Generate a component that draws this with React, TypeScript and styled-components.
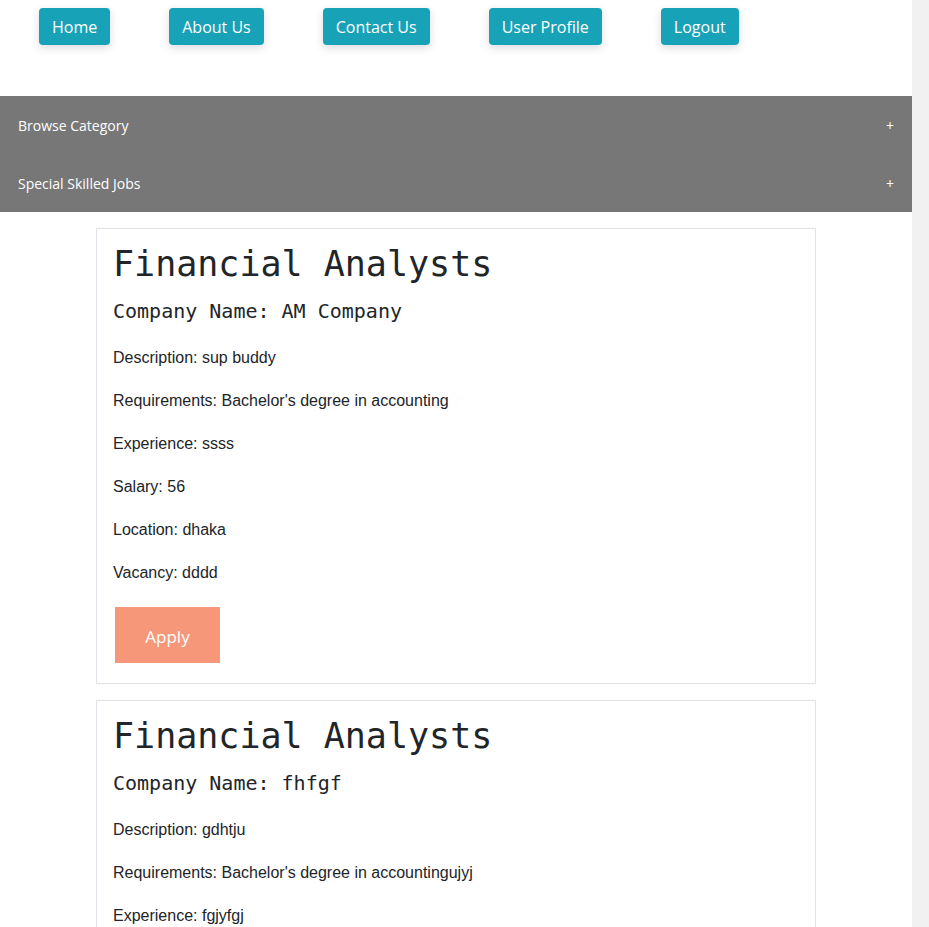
import React from "react";
import styled, { createGlobalStyle } from "styled-components";

const GlobalStyle = createGlobalStyle`
  html {
    overflow-y: scroll;
    background: #f1f1f1;
  }
  html::-webkit-scrollbar {
    width: 17px;
    background: #f1f1f1;
  }
  html::-webkit-scrollbar-thumb {
    background: #c1c1c1;
    border: 2px solid #f1f1f1;
    border-top-width: 17px;
  }
  body {
    margin: 0;
    padding: 0;
    width: 912px;
    background: #ffffff;
    font-family: "Liberation Sans", Arial, sans-serif;
    color: #212529;
  }
`;

const Nav = styled.nav`
  display: flex;
  align-items: flex-start;
  gap: 59px;
  height: 96px;
  padding: 8px 0 0 39px;
  box-sizing: border-box;
`;

const NavButton = styled.button`
  height: 37px;
  padding: 0 13px;
  border: 0;
  border-radius: 4px;
  background: #17a2b8;
  color: #ffffff;
  font-family: "Open Sans", sans-serif;
  font-size: 16px;
  box-shadow: 0 3px 8px rgba(60, 60, 90, 0.18);
  cursor: pointer;
`;

const Accordion = styled.div`
  background: #777777;
`;

const AccordionRow = styled.div`
  display: flex;
  align-items: center;
  justify-content: space-between;
  height: 58px;
  padding: 0 18px;
  color: #ffffff;
  font-family: "Open Sans", sans-serif;
  font-size: 14px;
  cursor: pointer;
`;

const Plus = styled.span`
  font-size: 14px;
`;

const List = styled.main`
  display: flex;
  flex-direction: column;
  gap: 16px;
  width: 720px;
  margin: 16px auto 40px;
`;

const Card = styled.article`
  border: 1px solid #dee2e6;
  padding: 14px 16px 20px;
`;

const Title = styled.h1`
  margin: 0;
  font-family: "DejaVu Sans Mono", monospace;
  font-size: 35px;
  font-weight: 400;
  line-height: 42px;
`;

const Company = styled.h3`
  margin: 14px 0 21px;
  font-family: "DejaVu Sans Mono", monospace;
  font-size: 20px;
  font-weight: 400;
  line-height: 24px;
`;

const Field = styled.p`
  margin: 16px 0;
  font-size: 16px;
  line-height: 27px;
`;

const ApplyButton = styled.button`
  display: block;
  width: 105px;
  height: 56px;
  margin: 21px 0 0 2px;
  padding: 2px 0 0;
  border: 0;
  background: #f7977a;
  color: #ffffff;
  font-family: "Open Sans", sans-serif;
  font-size: 17px;
  cursor: pointer;
`;

type Job = {
  title: string;
  company: string;
  description: string;
  requirements: string;
  experience: string;
  salary: string;
  location: string;
  vacancy: string;
};

const jobs: Job[] = [
  {
    title: "Financial Analysts",
    company: "AM Company",
    description: "sup buddy",
    requirements: "Bachelor's degree in accounting",
    experience: "ssss",
    salary: "56",
    location: "dhaka",
    vacancy: "dddd",
  },
  {
    title: "Financial Analysts",
    company: "fhfgf",
    description: "gdhtju",
    requirements: "Bachelor's degree in accountingujyj",
    experience: "fgjyfgj",
    salary: "45",
    location: "dhaka",
    vacancy: "3",
  },
];

const navItems = ["Home", "About Us", "Contact Us", "User Profile", "Logout"];

export default function App() {
  return (
    <>
      <GlobalStyle />
      <Nav>
        {navItems.map((item) => (
          <NavButton key={item}>{item}</NavButton>
        ))}
      </Nav>
      <Accordion>
        <AccordionRow>
          Browse Category <Plus>+</Plus>
        </AccordionRow>
        <AccordionRow>
          Special Skilled Jobs <Plus>+</Plus>
        </AccordionRow>
      </Accordion>
      <List>
        {jobs.map((job, i) => (
          <Card key={i}>
            <Title>{job.title}</Title>
            <Company>Company Name: {job.company}</Company>
            <Field>Description: {job.description}</Field>
            <Field>Requirements: {job.requirements}</Field>
            <Field>Experience: {job.experience}</Field>
            <Field>Salary: {job.salary}</Field>
            <Field>Location: {job.location}</Field>
            <Field>Vacancy: {job.vacancy}</Field>
            <ApplyButton>Apply</ApplyButton>
          </Card>
        ))}
      </List>
    </>
  );
}
